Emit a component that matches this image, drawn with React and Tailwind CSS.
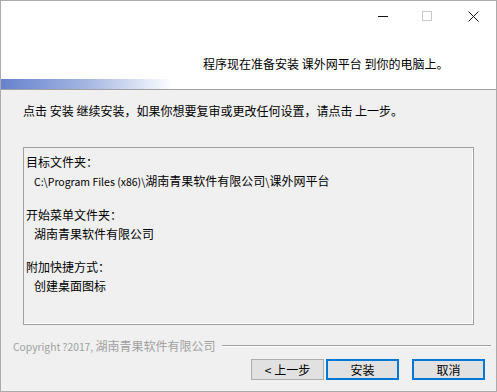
const font = { fontFamily: '"Noto Sans CJK SC", "Noto Sans", sans-serif' };

const L = ({ children }) => <span className="text-[10.5px]">{children}</span>;

const TitleButtons = () => (
  <div className="flex justify-end h-[30px]">
    <div className="w-[46px] h-[30px] flex items-center justify-center">
      <div className="w-[10px] h-px bg-[#111] ml-[4px]" />
    </div>
    <div className="w-[46px] h-[30px] flex items-center justify-center">
      <div className="w-[10px] h-[10px] border border-[#c8c8c8]" />
    </div>
    <div className="w-[46px] h-[30px] flex items-center justify-center">
      <svg width="11" height="11" viewBox="0 0 11 11">
        <path d="M0.5 0.5 L10.5 10.5 M10.5 0.5 L0.5 10.5" stroke="#111" strokeWidth="1" />
      </svg>
    </div>
  </div>
);

const Btn = ({ children, active, className = "" }) => (
  <button
    className={
      "w-[73px] h-[21px] bg-[#e1e1e1] text-[12px] leading-none text-black flex items-center justify-center " +
      (active ? "border-2 border-[#0078d7] " : "border border-[#adadad] ") +
      className
    }
  >
    {children}
  </button>
);

export default function App() {
  return (
    <div
      className="w-[497px] h-[392px] border border-[#ababab] bg-[#f0f0f0] flex flex-col text-[12px] text-black overflow-hidden"
      style={font}
    >
      <div className="bg-white h-[88px] flex flex-col border-b border-[#a0a0a0] box-content">
        <TitleButtons />
        <div className="mt-[24px] ml-[202px] leading-[17px] whitespace-nowrap">
          程序现在准备安装 课外网平台 到你的电脑上。
        </div>
        <div className="mt-auto w-[172px] h-[10px] bg-gradient-to-r from-[#6782cd] via-[#a6b6e2] to-white" />
      </div>

      <div className="px-[22px] pt-[12px] leading-[17px] whitespace-nowrap">
        点击 安装 继续安装，如果你想要复审或更改任何设置，请点击 上一步。
      </div>

      <div className="mx-[22px] mt-[28px] h-[178px] border border-[#a0a0a0] shadow-[inset_-1px_-1px_0_#ffffff] px-[2px] pt-[4px] leading-[19px] whitespace-nowrap">
        <div>目标文件夹：</div>
        <div className="pl-[8px]">
          <L>C:\Program Files (x86)\</L>湖南青果软件有限公司<L>\</L>课外网平台
        </div>
        <div className="mt-[14px]">开始菜单文件夹：</div>
        <div className="pl-[8px]">湖南青果软件有限公司</div>
        <div className="mt-[14px]">附加快捷方式：</div>
        <div className="pl-[8px]">创建桌面图标</div>
      </div>

      <div className="flex items-center pl-[12px] pr-[5px] mt-[12px] h-[17px]">
        <span className="text-[#a0a0a0] whitespace-nowrap">
          <span className="text-[10.3px]">Copyright ?2017, </span>湖南青果软件有限公司
        </span>
        <div className="flex-1 ml-[6px] border-t border-[#a0a0a0] border-b border-b-white" />
      </div>

      <div className="flex justify-end pr-[11px] mt-[5px]">
        <Btn>&lt; 上一步</Btn>
        <Btn active className="ml-[2px]">安装</Btn>
        <Btn active className="ml-[13px]">取消</Btn>
      </div>
    </div>
  );
}
